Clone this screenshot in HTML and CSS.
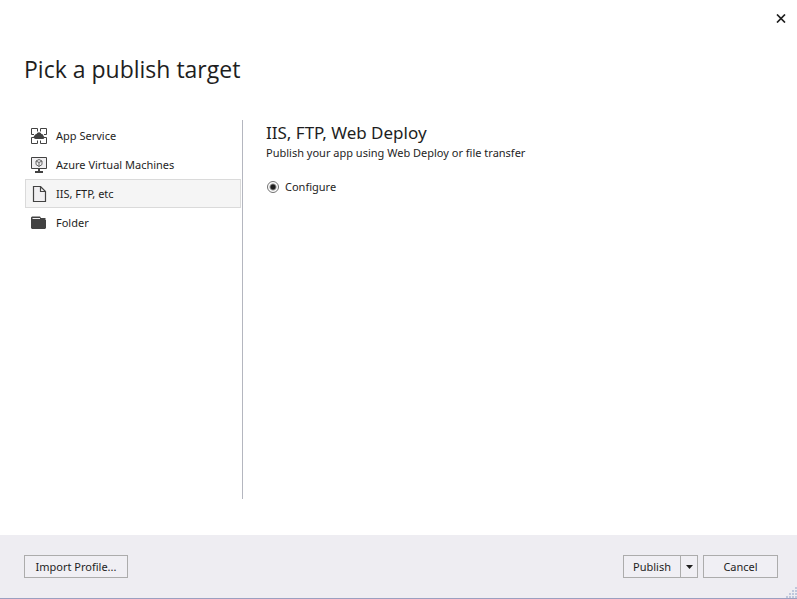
FILE: index.html
```html
<!DOCTYPE html>
<html lang="en">
<head>
<meta charset="utf-8">
<title>Pick a publish target</title>
<link rel="stylesheet" href="styles.css">
</head>
<body>
<div class="dialog">
  <header class="titlebar">
    <button class="close" type="button" aria-label="Close">
      <svg width="10" height="9" viewBox="0 0 10 9"><path d="M1 .5 9 8.500M9 .5 1 8.500" fill="none" stroke="#1e1e1e" stroke-width="1.700"/></svg>
    </button>
  </header>
  <h1 class="title">Pick a publish target</h1>
  <main class="content">
    <nav class="targets">
      <button class="target" type="button">
        <svg width="16" height="16" viewBox="0 0 16 16"><path d="M.5 5.500v-5h6v3M3 6.500H.5V5M9.500 3.500v-3h6v6H13M3 9.500H.5v6h6v-3M9.500 12.500v3h6v-6H13" fill="none" stroke="#424242"/><path d="M4.500 11A1.900 1.900 0 0 1 3.500 7.500 2 2 0 0 1 5.500 6 2.700 2.700 0 0 1 10.500 6 2 2 0 0 1 12.500 8 1.600 1.600 0 0 1 12 11z" fill="#424242"/></svg>
        <span>App Service</span>
      </button>
      <button class="target" type="button">
        <svg width="16" height="16" viewBox="0 0 16 16"><path d="M.5.500h15v11H.5z" fill="#f0eff1" stroke="#424242"/><path d="M7 12h2v2h3v2H4v-2h3z" fill="#424242"/><path d="m8 2.500 3 1.500v3.500L8 9.500l-3-2V4zM5 4l3 1.500L11 4M8 5.500v4" fill="none" stroke="#666"/></svg>
        <span>Azure Virtual Machines</span>
      </button>
      <button class="target selected" type="button" aria-current="true">
        <svg width="16" height="16" viewBox="0 0 16 16"><path d="M2.500.5h7l5 5v10h-12zM9.500.5v5h5" fill="#f0eff1" stroke="#424242" stroke-width="1.200"/></svg>
        <span>IIS, FTP, etc</span>
      </button>
      <button class="target" type="button">
        <svg width="16" height="16" viewBox="0 0 16 16"><path d="M0 2.500 1 1.500h8l1 1.500h4.500v2H15v8l-1 1H1l-1-1z" fill="#424242"/><path d="M1.500 3.500H9" fill="none" stroke="#f0eff1"/></svg>
        <span>Folder</span>
      </button>
    </nav>
    <section class="details">
      <h2 class="heading">IIS, FTP, Web Deploy</h2>
      <p class="summary">Publish your app using Web Deploy or file transfer</p>
      <label class="option"><input class="radio" type="radio" name="mode" checked>Configure</label>
    </section>
  </main>
  <footer class="footer">
    <button class="button import" type="button">Import Profile...</button>
    <div class="split">
      <button class="button publish" type="button">Publish</button>
      <button class="button more" type="button" aria-label="More publish options">
        <svg width="7" height="4" viewBox="0 0 7 4"><path d="M0 0h7L3.500 4z" fill="#1e1e1e"/></svg>
      </button>
    </div>
    <button class="button cancel" type="button">Cancel</button>
    <svg class="grip" width="11" height="11" viewBox="0 0 11 11"><path d="M9 0h2v2H9zM6 3h2v2H6zM9 3h2v2H9zM3 6h2v2H3zM6 6h2v2H6zM9 6h2v2H9zM0 9h2v2H0zM3 9h2v2H3zM6 9h2v2H6zM9 9h2v2H9z" fill="#bfc7dc"/></svg>
  </footer>
</div>
</body>
</html>
```
FILE: styles.css
```css
* {
  box-sizing: border-box;
}

body {
  margin: 0;
  background: #fff;
  color: #1e1e1e;
  font: 11px/16px "Noto Sans", "Open Sans", sans-serif;
}

button {
  font: inherit;
  color: inherit;
}

.dialog {
  display: flex;
  flex-direction: column;
  min-height: 100vh;
}

.titlebar {
  display: flex;
  justify-content: flex-end;
  height: 36px;
  padding: 0 4px;
}

.close {
  display: flex;
  align-items: center;
  justify-content: center;
  width: 24px;
  padding: 0;
  border: 0;
  background: none;
}

.title {
  margin: 16px 24px 0;
  font-family: "Open Sans", "Noto Sans", sans-serif;
  font-size: 23px;
  line-height: 34px;
  font-weight: 400;
}

.content {
  display: flex;
  flex: 1;
  margin: 34px 24px 36px;
}

.targets {
  display: flex;
  flex-direction: column;
  flex: 0 0 219px;
  padding: 1px;
  border-right: 1px solid #b4b6bf;
}

.target {
  display: flex;
  align-items: center;
  gap: 9px;
  height: 29px;
  padding: 0 5px;
  border: 1px solid transparent;
  background: none;
  text-align: left;
}

.selected {
  border-color: #dadada;
  background: #f5f5f5;
}

.details {
  flex: 1;
  padding: 1px 0 0 23px;
}

.heading {
  margin: 0;
  font-size: 17px;
  line-height: 24px;
  font-weight: 400;
}

.summary {
  margin: 0;
}

.option {
  display: flex;
  align-items: center;
  gap: 6px;
  margin: 18px 0 0 1px;
}

.radio {
  appearance: none;
  width: 12px;
  height: 12px;
  margin: 0;
  border: 1px solid #717171;
  border-radius: 50%;
  background: radial-gradient(circle, #1e1e1e 2px, #fff 4px);
}

.footer {
  position: relative;
  display: flex;
  gap: 5px;
  height: 64px;
  padding: 20px 19px 0 24px;
  border-bottom: 1px solid #9b9fc0;
  background: #eeedf2;
}

.button {
  height: 23px;
  padding: 0;
  border: 1px solid #acacac;
  background: #f0eff4;
}

.import {
  width: 104px;
  margin-right: auto;
}

.split {
  display: flex;
}

.publish {
  width: 58px;
}

.more {
  display: flex;
  align-items: center;
  justify-content: center;
  width: 18px;
  margin-left: -1px;
}

.cancel {
  width: 75px;
}

.grip {
  position: absolute;
  right: 0;
  bottom: 0;
}
```
